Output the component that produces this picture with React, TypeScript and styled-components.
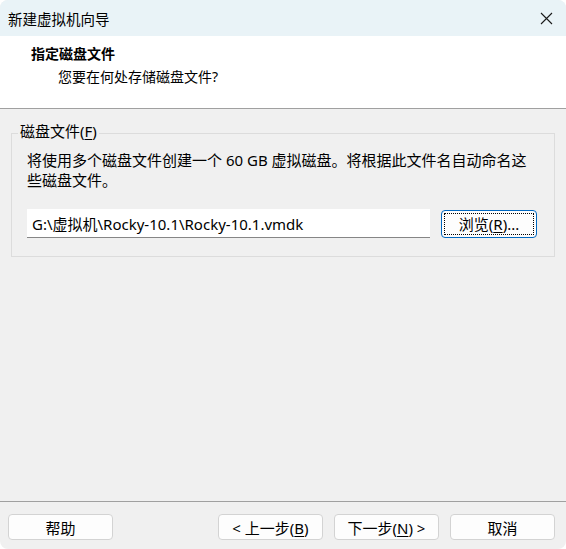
import React, { useState } from "react";
import styled, { createGlobalStyle } from "styled-components";

const GlobalStyle = createGlobalStyle`
  html, body {
    margin: 0;
    padding: 0;
    background: #ffffff;
  }
  body {
    font-family: "Noto Sans", "Noto Sans CJK SC", sans-serif;
    color: #000000;
  }
`;

const Window = styled.div`
  width: 566px;
  height: 549px;
  display: flex;
  flex-direction: column;
  background: #f0f0f0;
  border-radius: 8px;
  overflow: hidden;
  font-size: 15px;
`;

const TitleBar = styled.div`
  height: 36px;
  flex: none;
  display: flex;
  align-items: center;
  justify-content: space-between;
  padding-left: 8px;
  background: #e9f3f7;
  font-size: 14.5px;
`;

const CloseButton = styled.div`
  width: 40px;
  height: 36px;
  display: flex;
  align-items: center;
  justify-content: center;
`;

const Header = styled.div`
  height: 73px;
  flex: none;
  box-sizing: border-box;
  padding: 9px 0 0 31px;
  background: #ffffff;
  border-bottom: 1px solid #a0a0a0;
`;

const HeaderTitle = styled.div`
  font-size: 14px;
  font-weight: 700;
  line-height: 18px;
`;

const HeaderSub = styled.div`
  font-size: 14px;
  line-height: 18px;
  margin-top: 5px;
  padding-left: 27px;
`;

const Body = styled.div`
  flex: 1;
  padding: 0 11px;
`;

const GroupBox = styled.fieldset`
  margin: 13px 0 0 0;
  padding: 0 17px 18px 15px;
  border: 1px solid #dcdcdc;
  min-width: 0;
`;

const GroupLabel = styled.legend`
  margin-left: -9px;
  padding: 0 2px 4px 2px;
  line-height: 18px;
`;

const Description = styled.p`
  margin: 6px 0 0 0;
  line-height: 20px;
`;

const PathRow = styled.div`
  display: flex;
  align-items: center;
  gap: 11px;
  margin-top: 19px;
`;

const PathInput = styled.input`
  width: 403px;
  height: 29px;
  box-sizing: border-box;
  padding: 0 5px;
  border: none;
  border-bottom: 1px solid #868686;
  background: #ffffff;
  font: inherit;
  font-size: 15px;
  color: #000000;
  outline: none;
`;

const Button = styled.button<{ $focused?: boolean }>`
  width: 105px;
  height: 26px;
  box-sizing: border-box;
  padding: 0;
  border: 1px solid ${(p) => (p.$focused ? "#0067c0" : "#d3d3d3")};
  border-radius: 4px;
  background: #fdfdfd;
  font: inherit;
  font-size: 15px;
  color: #000000;
  position: relative;

  ${(p) =>
    p.$focused &&
    `
    &::after {
      content: "";
      position: absolute;
      inset: 2px;
      border: 1px dotted #000000;
    }
  `}
`;

const BrowseButton = styled(Button)`
  width: 96px;
  height: 28px;
`;

const Footer = styled.div`
  height: 48px;
  flex: none;
  box-sizing: border-box;
  display: flex;
  align-items: flex-start;
  gap: 11px;
  padding: 12px 11px 0 8px;
  border-top: 1px solid #a0a0a0;
`;

const Spacer = styled.div`
  flex: 1;
`;

const Key = styled.span`
  text-decoration: underline;
  text-underline-offset: 2px;
`;

const App: React.FC = () => {
  const [path, setPath] = useState("G:\\虚拟机\\Rocky-10.1\\Rocky-10.1.vmdk");

  return (
    <Window>
      <GlobalStyle />
      <TitleBar>
        <span>新建虚拟机向导</span>
        <CloseButton>
          <svg width="13" height="13" viewBox="0 0 13 13">
            <path d="M1 1L12 12M12 1L1 12" stroke="#1a1a1a" strokeWidth="1.1" />
          </svg>
        </CloseButton>
      </TitleBar>
      <Header>
        <HeaderTitle>指定磁盘文件</HeaderTitle>
        <HeaderSub>您要在何处存储磁盘文件?</HeaderSub>
      </Header>
      <Body>
        <GroupBox>
          <GroupLabel>
            磁盘文件(<Key>F</Key>)
          </GroupLabel>
          <Description>
            将使用多个磁盘文件创建一个 60 GB 虚拟磁盘。将根据此文件名自动命名这些磁盘文件。
          </Description>
          <PathRow>
            <PathInput value={path} onChange={(e) => setPath(e.target.value)} />
            <BrowseButton $focused>
              浏览(<Key>R</Key>)...
            </BrowseButton>
          </PathRow>
        </GroupBox>
      </Body>
      <Footer>
        <Button>帮助</Button>
        <Spacer />
        <Button>
          &lt; 上一步(<Key>B</Key>)
        </Button>
        <Button>
          下一步(<Key>N</Key>) &gt;
        </Button>
        <Button>取消</Button>
      </Footer>
    </Window>
  );
};

export default App;
